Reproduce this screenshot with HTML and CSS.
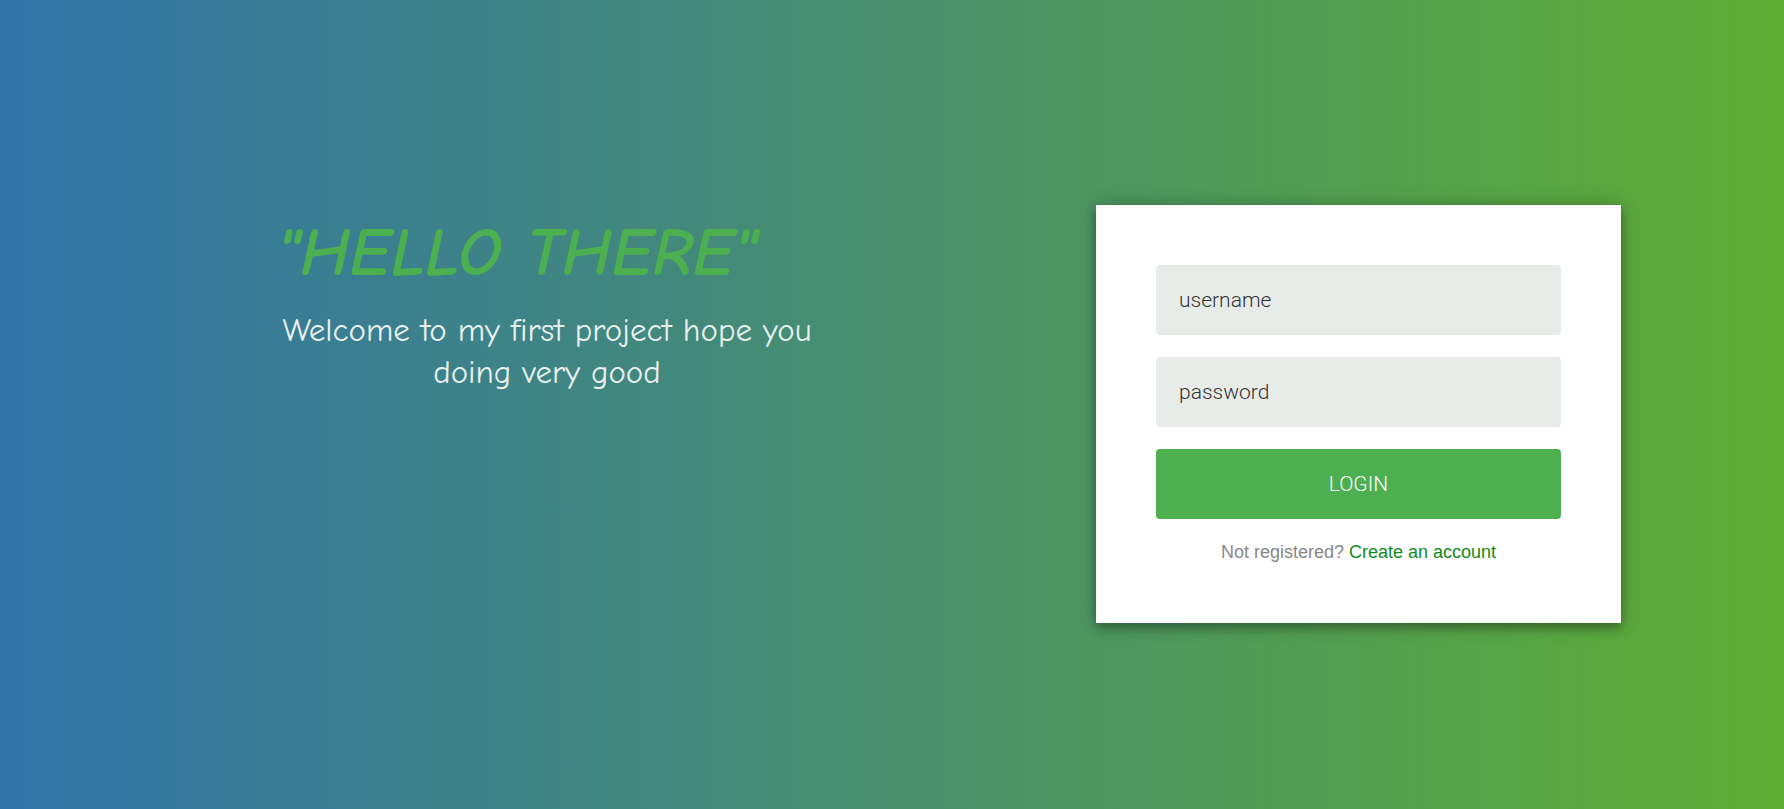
FILE: index.html
```html
<!DOCTYPE html>
<html lang="en">
<head>
<meta charset="utf-8">
<meta name="viewport" content="width=device-width, initial-scale=1">
<title>Login</title>
<link rel="stylesheet" href="styles.css">
</head>
<body class="page">
<main class="layout">
  <section class="intro">
    <h1 class="intro-title">"HELLO THERE"</h1>
    <p class="intro-text">Welcome to my first project hope you doing very good</p>
  </section>
  <form class="card">
    <input class="field" type="text" placeholder="username" aria-label="username">
    <input class="field" type="password" placeholder="password" aria-label="password">
    <button class="submit" type="button">LOGIN</button>
    <p class="message">Not registered? <a class="link" href="#">Create an account</a></p>
  </form>
</main>
</body>
</html>
```
FILE: styles.css
```css
* {
  box-sizing: border-box;
}

.page {
  margin: 0;
  min-height: 100vh;
  background: linear-gradient(to right, #3173a8, #5fad34);
  font-family: "Liberation Sans", Arial, sans-serif;
}

.layout {
  display: flex;
  flex-wrap: wrap;
  justify-content: space-between;
  align-items: flex-start;
  gap: 40px;
  padding: 205px 163px 40px 277px;
}

.intro {
  flex: 0 1 540px;
  padding-top: 8px;
  font-family: "Comic Sans MS", "Comic Neue", "Noto Sans", sans-serif;
}

.intro-title {
  margin: 0 0 16px;
  color: #4caf50;
  font-size: 69px;
  font-style: italic;
  font-weight: 700;
  line-height: 80px;
}

.intro-text {
  margin: 0;
  color: #e8f0ee;
  font-size: 33px;
  line-height: 42px;
  text-align: center;
}

.card {
  display: flex;
  flex: 0 1 525px;
  flex-direction: column;
  gap: 22px;
  padding: 60px;
  background: #fff;
  box-shadow: 0 0 20px rgba(0, 0, 0, 0.2), 0 5px 10px rgba(0, 0, 0, 0.3);
}

.field,
.submit {
  width: 100%;
  height: 70px;
  padding: 0 23px;
  border: 0;
  border-radius: 4px;
  font-family: Roboto, sans-serif;
  font-size: 21px;
  font-weight: 300;
}

.field {
  background: #e7ece8;
  color: #333;
}

.field::placeholder {
  color: #333;
  opacity: 1;
}

.submit {
  background: #4caf50;
  color: #fff;
  cursor: pointer;
}

.message {
  margin: 0;
  color: #888;
  font-size: 18px;
  line-height: 22px;
  text-align: center;
}

.link {
  color: #118c1c;
  text-decoration: none;
}
```
